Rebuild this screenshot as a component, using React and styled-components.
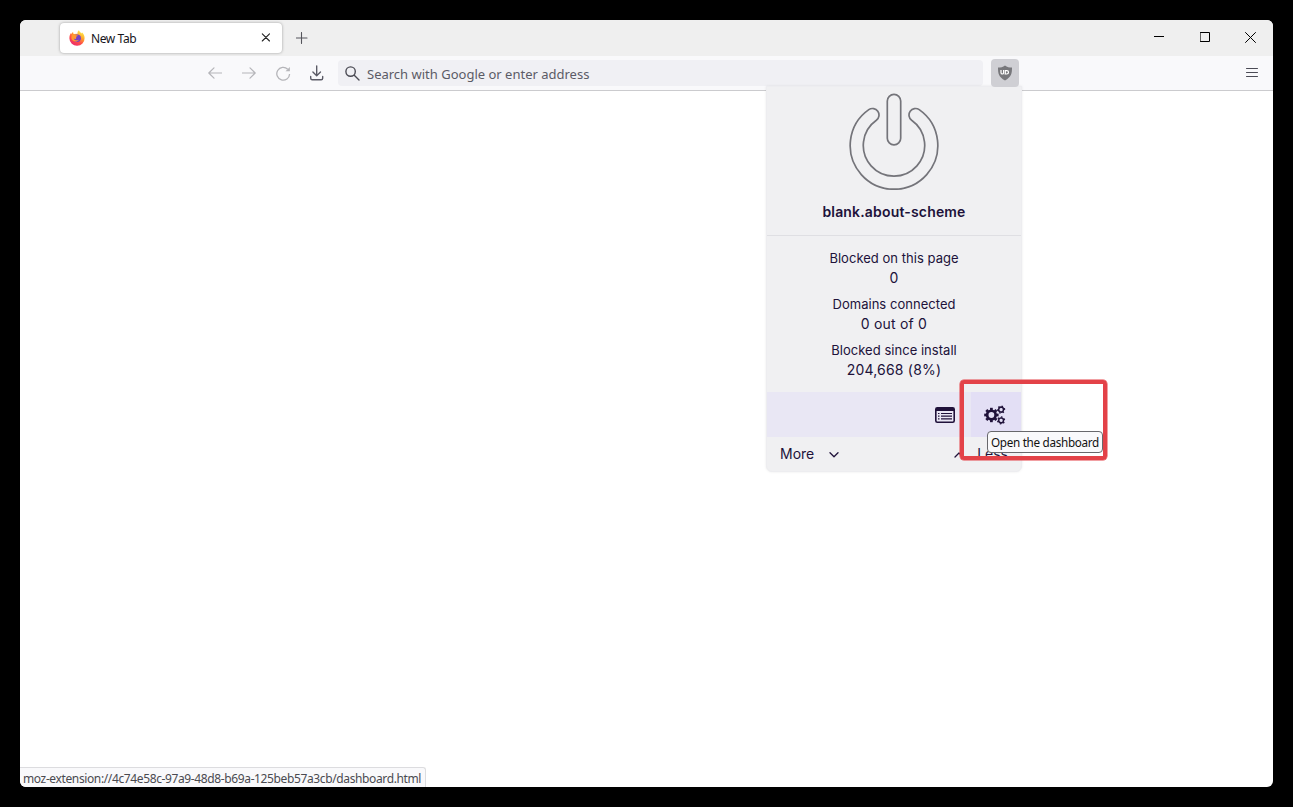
import React from "react";
import styled, { createGlobalStyle } from "styled-components";

const ui = '"Noto Sans", "Open Sans", sans-serif';

const GlobalStyle = createGlobalStyle`
  * { box-sizing: border-box; }
  html, body { margin: 0; background: #000; overflow: hidden; }
  svg { display: block; flex: none; }
`;

const Desktop = styled.div`
  width: 1293px;
  height: 807px;
  padding: 20px;
  background: #000;
`;

const Window = styled.main`
  position: relative;
  display: flex;
  flex-direction: column;
  width: 1253px;
  height: 767px;
  border-radius: 6px;
  overflow: hidden;
  background: #fff;
  font-family: ${ui};
`;

const TabBar = styled.header`
  display: flex;
  align-items: center;
  height: 36px;
  padding-left: 40px;
  background: #efefef;
`;

const Tab = styled.div`
  display: flex;
  align-items: center;
  width: 222px;
  height: 30px;
  margin-bottom: 1px;
  padding: 0 12px 0 9px;
  border-radius: 4px;
  background: #fff;
  box-shadow: 0 0 3px rgba(0, 0, 0, 0.35);
`;

const TabTitle = styled.span`
  flex: 1;
  margin-left: 6px;
  padding-top: 2px;
  font-size: 12px;
  line-height: 16px;
  letter-spacing: -0.4px;
  color: #15141a;
`;

const NewTab = styled.div`
  margin: 0 auto 1px 14px;
`;

const WindowButtons = styled.div`
  display: flex;
  padding-bottom: 2px;
`;

const WindowButton = styled.div`
  display: grid;
  place-items: center;
  width: 46px;
  height: 34px;
  &:last-child { width: 45px; }
`;

const Toolbar = styled.nav`
  display: flex;
  align-items: center;
  height: 35px;
  padding-left: 178px;
  background: #f9f9fb;
  border-bottom: 1px solid #cbcbce;
`;

const NavButton = styled.div`
  display: grid;
  place-items: center;
  width: 34px;
  height: 34px;
  color: ${(p) => (p.$disabled ? "#b5b5b9" : "#5b5b66")};
`;

const AddressBar = styled.div`
  display: flex;
  align-items: center;
  width: 645px;
  height: 26px;
  margin: 0 8px 0 4px;
  padding-left: 7px;
  border-radius: 4px;
  background: #f0f0f4;
  color: #4a4a53;
`;

const Placeholder = styled.span`
  margin-left: 7px;
  padding-top: 2px;
  font-size: 13px;
  line-height: 18px;
  color: #5b5b66;
`;

const ExtensionButton = styled.div`
  position: relative;
  z-index: 2;
  display: grid;
  place-items: center;
  width: 28px;
  height: 28px;
  margin-right: auto;
  border-radius: 4px;
  background: #cfcfd4;
`;

const MenuButton = styled.div`
  margin: 0 15px 0 0;
`;

const Popup = styled.section`
  position: absolute;
  top: 66px;
  left: 746px;
  display: flex;
  flex-direction: column;
  width: 256px;
  height: 386px;
  border-radius: 0 0 6px 6px;
  background: #f0f0f2;
  border: 1px solid #ededf0;
  box-shadow: 0 0 3px rgba(0, 0, 0, 0.08);
  font-family: Inter, sans-serif;
  color: #20123a;
`;

const PowerArea = styled.div`
  display: flex;
  flex-direction: column;
  align-items: center;
  height: 149px;
  padding-top: 5px;
  border-bottom: 1px solid #dfdfe3;
`;

const Hostname = styled.strong`
  margin-top: 12px;
  font-size: 14px;
  line-height: 20px;
  font-weight: 600;
  letter-spacing: 0.17px;
`;

const Stats = styled.dl`
  display: flex;
  flex-direction: column;
  gap: 6px;
  height: 156px;
  margin: 0;
  padding-top: 12px;
  text-align: center;
`;

const Stat = styled.div`
  height: 40px;
`;

const StatLabel = styled.dt`
  font-size: 13px;
  line-height: 20px;
  letter-spacing: 0.03px;
`;

const StatValue = styled.dd`
  margin: 0;
  font-size: 14px;
  line-height: 20px;
  letter-spacing: 0.2px;
`;

const Tools = styled.div`
  display: flex;
  justify-content: flex-end;
  height: 45px;
  background: #e9e7f4;
`;

const Tool = styled.div`
  display: grid;
  place-items: center;
  width: 50px;
  padding-right: 2px;
  background: ${(p) => (p.$hover ? "#e3dff5" : "transparent")};
`;

const Footer = styled.footer`
  display: flex;
  align-items: center;
  height: 34px;
  padding: 0 13px;
  gap: 15px;
  font-size: 14px;
  line-height: 20px;
`;

const Spacer = styled.span`
  flex: 1;
`;

const Arrow = styled.span`
  padding-top: 1px;
  margin-right: ${(p) => (p.$up ? "-2px" : "0")};
`;

const Highlight = styled.div`
  position: absolute;
  top: 360px;
  left: 940px;
  width: 147px;
  height: 80px;
  border: 4px solid #e34248;
  border-radius: 4px;
  box-shadow: 0 0 0 0.5px #e34248;
`;

const Tooltip = styled.div`
  position: absolute;
  top: 411px;
  left: 967px;
  width: 116px;
  height: 22px;
  padding-left: 3px;
  border: 1px solid #68686c;
  border-radius: 4px;
  background: #f9f9fb;
  font-size: 11.7px;
  line-height: 21px;
  letter-spacing: -0.3px;
  white-space: nowrap;
  color: #111;
`;

const StatusLink = styled.div`
  position: absolute;
  left: 0;
  bottom: 0;
  width: 406px;
  height: 20px;
  padding-left: 3px;
  border-top: 1px solid #dcdcdf;
  border-right: 1px solid #dcdcdf;
  border-top-right-radius: 3px;
  background: #f9f9fb;
  font-size: 12px;
  line-height: 22px;
  letter-spacing: -0.375px;
  white-space: nowrap;
  color: #4a4a50;
`;

const Line = ({ w, h = w, d, sw = 1.3, color = "currentColor" }) => (
  <svg width={w} height={h} viewBox={`0 0 ${w} ${h}`} fill="none" stroke={color}
    strokeWidth={sw} strokeLinecap="round" strokeLinejoin="round">
    <path d={d} />
  </svg>
);

const FirefoxLogo = () => (
  <svg width="16" height="16" viewBox="0 0 16 16">
    <defs>
      <linearGradient id="flame" x1=".85" y1=".05" x2=".25" y2="1">
        <stop offset="0" stopColor="#fff44f" />
        <stop offset=".35" stopColor="#ffa62b" />
        <stop offset=".65" stopColor="#ff4c4a" />
        <stop offset="1" stopColor="#e92870" />
      </linearGradient>
    </defs>
    <path fill="url(#flame)" d="M10 .3c.4 1.6 1.6 2.2 2.7 3.2.3-.5.2-1 .1-1.3 1.7 1.2 2.8 3.4 2.8 5.8a7.6 7.6 0 0 1-15.2.4C.3 6 1 4 2 2.9c0 .5 0 .8.2 1.1C2.7 3 3.5 2.3 4.2 2c-.2.9.1 1.5.5 1.9L8.5 3.7C8.4 2.2 9 .9 10 .3z" />
    <circle cx="8.2" cy="8.2" r="3.7" fill="#7542c5" />
    <path fill="#ff9a2e" d="M2.8 5c1.5-1.2 3-.9 4 .2l1.9.1c.1.8-1.3 1.1-1.5 1.5-.3.9.4 1.4-.3 2-.7.5-1.8-.1-2.3-.3.7 2 3.5 2.4 5.2.9-1.1 3.2-7 2.6-7.5-1.4z" />
  </svg>
);

const Shield = () => (
  <svg width="16" height="16" viewBox="0 0 16 16">
    <path fill="#77777b" d="M8 .4c2 1.5 4.3 2.2 7 2.2 0 6.4-.7 9.4-7 13C1.7 12 1 9 1 2.6c2.7 0 5-.7 7-2.2z" />
    <path fill="none" stroke="#fff" strokeWidth="1.2" d="M4 5.100v2.600a1.300 1.300 0 0 0 2.600 0V5.100" />
    <path fill="none" stroke="#fff" strokeWidth="1.2" d="M8.3 5v4.4M8.3 5.6h1.5a1.7 1.7 0 0 1 0 3.4H7.5" />
  </svg>
);

const PowerIcon = () => (
  <svg width="90" height="98" viewBox="-45 -53 90 98" fill="#f0f0f2" stroke="#74747a" strokeWidth="1.7">
    <g transform="translate(0 .4)">
      <path d="M-25.2-35.8A43.8 43.8 0 1 0 25.2-35.8A6.55 6.55 0 0 0 17.65-25.1A30.7 30.7 0 1 1-17.65-25.1A6.55 6.55 0 0 0-25.2-35.8z" />
      <rect x="-6.7" y="-51" width="13.4" height="50.5" rx="6.7" />
    </g>
  </svg>
);

const ListIcon = () => (
  <svg width="20" height="16" viewBox="0 0 20 16">
    <rect x=".8" y=".8" width="18.4" height="14.4" rx="1.5" fill="none" stroke="#20123a" strokeWidth="1.6" />
    <path fill="#20123a" d="M1 1h18v3H1z" />
    <path stroke="#20123a" strokeWidth="1.2" d="M3 6.500h1.500M6 6.500h11M3 9.200h1.500M6 9.200h11M3 11.900h1.500M6 11.900h11" />
  </svg>
);

const Gear = ({ x, y, r, teeth, turn = 0 }) => (
  <g transform={`translate(${x} ${y}) rotate(${turn})`}>
    <circle r={r * 0.59} fill="none" stroke="#20123a" strokeWidth={r * 0.38} />
    {Array.from({ length: teeth }, (_, i) => (
      <rect key={i} x={-r * 0.19} y={-r} width={r * 0.38} height={r * 0.32}
        fill="#20123a" transform={`rotate(${(i * 360) / teeth})`} />
    ))}
  </g>
);

const GearsIcon = () => (
  <svg width="22" height="20" viewBox="0 0 22 20">
    <Gear x={7.4} y={10} r={7.2} teeth={8} />
    <Gear x={17.1} y={4.6} r={4.1} teeth={6} turn={20} />
    <Gear x={17.1} y={15.4} r={4.1} teeth={6} turn={10} />
  </svg>
);

const stats = [
  ["Blocked on this page", "0"],
  ["Domains connected", "0 out of 0"],
  ["Blocked since install", "204,668 (8%)"],
];

export default function App() {
  return (
    <Desktop>
      <GlobalStyle />
      <Window>
        <TabBar>
          <Tab>
            <FirefoxLogo />
            <TabTitle>New Tab</TabTitle>
            <Line w={9} d="M1.3.8l7.2 7.2M8.5.8L1.3 8" sw={1.1} color="#222" />
          </Tab>
          <NewTab><Line w={12} d="M5.5.5v11M0 6h11" sw={1.1} color="#55555c" /></NewTab>
          <WindowButtons>
            <WindowButton><Line w={10} d="M0 4.5h10" sw={1} color="#000" /></WindowButton>
            <WindowButton><Line w={10} d="M.5.5h9v9h-9z" sw={1} color="#000" /></WindowButton>
            <WindowButton><Line w={11} d="M.5.5l10 10M10.5.5l-10 10" sw={1} color="#000" /></WindowButton>
          </WindowButtons>
        </TabBar>
        <Toolbar>
          <NavButton $disabled><Line w={14} d="M13.5 7H.8M6 1.8L.8 7 6 12.2" sw={1.2} /></NavButton>
          <NavButton $disabled><Line w={14} d="M.5 7h12.7M8 1.8L13.2 7 8 12.2" sw={1.2} /></NavButton>
          <NavButton $disabled>
            <svg width="16" height="16" viewBox="0 0 16 16" fill="none" stroke="currentColor" strokeWidth="1.3">
              <path d="M14.6 9A6.4 6.4 0 1 1 12.7 4.2" />
              <path d="M14.9 1.9v4.4h-4.4z" fill="currentColor" stroke="none" />
            </svg>
          </NavButton>
          <NavButton><Line w={14} h={16} d="M6.7.8v9.7M2.9 6.9L6.7 10.7l3.8-3.8M.7 11.5v1.7q0 1.5 1.5 1.5h9q1.5 0 1.5-1.5v-1.7" sw={1.35} /></NavButton>
          <AddressBar>
            <Line w={15} d="M10.3 5.6a4.7 4.7 0 1 1-9.4 0a4.7 4.7 0 1 1 9.4 0M9 9l5 5" sw={1.4} />
            <Placeholder>Search with Google or enter address</Placeholder>
          </AddressBar>
          <ExtensionButton><Shield /></ExtensionButton>
          <MenuButton><Line w={12} h={10} d="M.5 .5h11M.5 4.5h11M.5 8.5h11" sw={1} color="#4b4b56" /></MenuButton>
        </Toolbar>

        <Popup>
          <PowerArea>
            <PowerIcon />
            <Hostname>blank.about-scheme</Hostname>
          </PowerArea>
          <Stats>
            {stats.map(([label, value]) => (
              <Stat key={label}>
                <StatLabel>{label}</StatLabel>
                <StatValue>{value}</StatValue>
              </Stat>
            ))}
          </Stats>
          <Tools>
            <Tool><ListIcon /></Tool>
            <Tool $hover><GearsIcon /></Tool>
          </Tools>
          <Footer>
            <span>More</span>
            <Arrow><Line w={10} h={6} d="M1 .8l4 4 4-4" sw={1.3} /></Arrow>
            <Spacer />
            <Arrow $up><Line w={10} h={6} d="M1 5l4-4 4 4" sw={1.3} /></Arrow>
            <span>Less</span>
          </Footer>
        </Popup>

        <Highlight />
        <Tooltip>Open the dashboard</Tooltip>
        <StatusLink>moz-extension://4c74e58c-97a9-48d8-b69a-125beb57a3cb/dashboard.html</StatusLink>
      </Window>
    </Desktop>
  );
}
